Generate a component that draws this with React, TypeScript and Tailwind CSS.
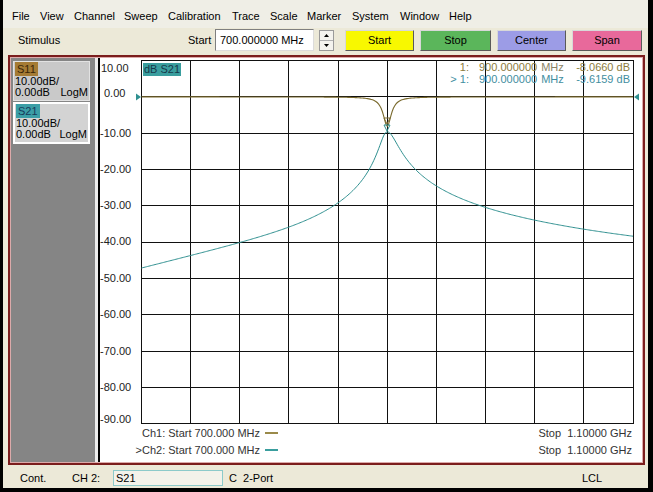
import React from 'react';

// plot geometry, in page pixels
const X0 = 141.5;
const XW = 491.5;
const Y0DB = 96.9;
const PX_DB = 3.63;

const gridX = Array.from({ length: 11 }, (_, i) => Math.round(141 + i * 49.15) + 0.5);
const gridY = Array.from({ length: 11 }, (_, i) => Math.floor(60.6 + i * 36.3) + 0.5);

const xForFreq = (f: number) => X0 + ((f - 700) / 400) * XW;
const yForDb = (db: number) => Y0DB - db * PX_DB;

const s21Db = (f: number) => {
  const d = f - 900;
  if (d < 0) {
    const a = -d;
    return -9.6159 - 10 * Math.log10(1 + Math.pow(a / 5.2, 2.2) + Math.pow(a / 54, 6));
  }
  return -9.6159 - 10 * Math.log10(1 + Math.pow(d / 7.3, 2));
};

const s11Db = (f: number) => {
  const d = f - 900;
  return -8.066 / (1 + Math.pow(d / 4, 2));
};

const tracePoints = (fn: (f: number) => number) => {
  const pts: string[] = [];
  for (let f = 700; f <= 1100; f += 1) {
    pts.push(`${xForFreq(f).toFixed(2)},${yForDb(fn(f)).toFixed(2)}`);
  }
  return pts.join(' ');
};

const yLabels = [
  { t: '10.00', x: 101, y: 68 },
  { t: '0.00', x: 104, y: 93 },
  { t: '-10.00', x: 100, y: 133 },
  { t: '-20.00', x: 100, y: 169 },
  { t: '-30.00', x: 100, y: 205 },
  { t: '-40.00', x: 100, y: 241 },
  { t: '-50.00', x: 100, y: 278 },
  { t: '-60.00', x: 100, y: 314 },
  { t: '-70.00', x: 100, y: 351 },
  { t: '-80.00', x: 100, y: 387 },
  { t: '-90.00', x: 100, y: 419 },
];

// menu captions with the width each one takes in the bar
const menu: [string, string][] = [
  ['File', 'w-[28px]'],
  ['View', 'w-[34px]'],
  ['Channel', 'w-[50px]'],
  ['Sweep', 'w-[44px]'],
  ['Calibration', 'w-[64px]'],
  ['Trace', 'w-[38px]'],
  ['Scale', 'w-[37px]'],
  ['Marker', 'w-[45px]'],
  ['System', 'w-[48px]'],
  ['Window', 'w-[49px]'],
  ['Help', 'w-[30px]'],
];

const S11_COLOR = '#7a6a2e';
const S21_COLOR = '#2f9090';

const TraceBox: React.FC<{ name: string; labelClass: string; boxClass: string }> = ({ name, labelClass, boxClass }) => (
  <div className={`w-[77px] flex flex-col ${boxClass}`}>
    <div className="h-[14px] flex items-center pl-[1px]">
      <span className={`px-[2px] h-[14px] leading-[14px] ${labelClass}`}>{name}</span>
    </div>
    <div className="h-[11px] leading-[11px] pl-[1px]">10.00dB/</div>
    <div className="h-[11px] leading-[11px] pl-[1px] pr-[1px] flex justify-between">
      <span>0.00dB</span>
      <span>LogM</span>
    </div>
  </div>
);

const ToolButton: React.FC<{ label: string; className: string }> = ({ label, className }) => (
  <div
    className={`h-[21px] flex items-center justify-center border border-[#d8d8d8] border-b-[#5a5a5a] border-r-[#5a5a5a] ${className}`}
  >
    {label}
  </div>
);

const Chart: React.FC = () => (
  <div className="relative flex-1 flex flex-col bg-white border-l-2 border-black">
    <svg width={540} height={367} viewBox="100 58 540 367" className="block">
      {gridY.map((y) => (
        <line key={`h${y}`} x1={141} x2={634} y1={y} y2={y} stroke="#111" strokeWidth={1} />
      ))}
      {gridX.map((x) => (
        <line key={`v${x}`} x1={x} x2={x} y1={60} y2={424} stroke="#111" strokeWidth={1} />
      ))}
      {yLabels.map((l) => (
        <text key={l.t} x={l.x} y={l.y + 4} fontSize={11} fill="#222">
          {l.t}
        </text>
      ))}
      <polyline points={tracePoints(s11Db)} fill="none" stroke={S11_COLOR} strokeWidth={1.1} />
      <polyline points={tracePoints(s21Db)} fill="none" stroke={S21_COLOR} strokeWidth={1} />
      {/* markers */}
      <polygon points="384,118 390,118 387,124" fill="none" stroke={S11_COLOR} strokeWidth={1} />
      <polygon points="384,125 390,125 387,131" fill="none" stroke={S21_COLOR} strokeWidth={1} />
      {/* reference level arrows */}
      <polygon points="136,93.5 141,97 136,100.5" fill={S21_COLOR} />
      <polygon points="639,93.5 634,97 639,100.5" fill={S21_COLOR} />
    </svg>

    <div className="absolute left-[43px] top-[5px] h-[13px] leading-[13px] px-[1px] bg-[#3a9e9e] text-[#17384a]">
      dB S21
    </div>

    <div className="absolute left-[340px] top-[3px] w-[190px] flex flex-col">
      <div className="h-[12px] leading-[12px] flex text-[#8c7b3c]">
        <span className="w-[29px] text-right">1:</span>
        <span className="ml-[10px]">900.000000</span>
        <span className="ml-[4px] text-[#8a8366]">MHz</span>
        <span className="flex-1 text-right">-8.0660 dB</span>
      </div>
      <div className="h-[12px] leading-[12px] flex text-[#3f8ea0]">
        <span className="w-[29px] text-right">&gt; 1:</span>
        <span className="ml-[10px]">900.000000</span>
        <span className="ml-[4px]">MHz</span>
        <span className="flex-1 text-right">-9.6159 dB</span>
      </div>
    </div>

    <div className="h-[16px] flex items-center text-[#333]">
      <div className="w-[178px] flex justify-end items-center gap-[5px]">
        <span>Ch1: Start 700.000 MHz</span>
        <span className="w-[13px] h-[2px] bg-[#9a8a4a]" />
      </div>
      <span className="ml-auto mr-[10px] whitespace-pre">Stop  1.10000 GHz</span>
    </div>
    <div className="h-[18px] flex items-center text-[#333]">
      <div className="w-[178px] flex justify-end items-center gap-[5px]">
        <span>&gt;Ch2: Start 700.000 MHz</span>
        <span className="w-[13px] h-[2px] bg-[#3a9e9e]" />
      </div>
      <span className="ml-auto mr-[10px] whitespace-pre">Stop  1.10000 GHz</span>
    </div>
  </div>
);

export default function App() {
  return (
    <div className="w-[653px] h-[492px] bg-[#ece9d8] border-l-[3px] border-r-[5px] border-b-[4px] border-black flex flex-col text-[11px] text-black font-['Liberation_Sans',Arial,sans-serif] overflow-hidden">
      {/* menu bar */}
      <div className="h-[28px] pt-[4px] pl-[9px] flex items-center bg-[#efeee6]">
        {menu.map(([m, w]) => (
          <span key={m} className={`${w} shrink-0`}>
            {m}
          </span>
        ))}
      </div>

      {/* stimulus toolbar */}
      <div className="h-[27px] pb-[3px] flex items-center">
        <span className="w-[185px] pl-[15px]">Stimulus</span>
        <span className="w-[27px]">Start</span>
        <div className="w-[99px] h-[22px] bg-white border border-[#7f7f7f] border-b-[#dcdcdc] border-r-[#dcdcdc] flex items-center pl-[4px]">
          700.000000 MHz
        </div>
        <div className="ml-[5px] w-[15px] h-[21px] flex flex-col border border-[#9a9a9a] bg-[#f4f3ee]">
          <div className="flex-1 flex items-center justify-center border-b border-[#b0b0b0]">
            <svg width={5} height={3} viewBox="0 0 5 3">
              <polygon points="0,3 5,3 2.5,0" fill="#000" />
            </svg>
          </div>
          <div className="flex-1 flex items-center justify-center">
            <svg width={5} height={3} viewBox="0 0 5 3">
              <polygon points="0,0 5,0 2.5,3" fill="#000" />
            </svg>
          </div>
        </div>
        <div className="ml-[11px] flex gap-[6px]">
          <ToolButton label="Start" className="w-[69px] bg-[#f8f800]" />
          <ToolButton label="Stop" className="w-[71px] bg-[#5bb65b]" />
          <ToolButton label="Center" className="w-[69px] bg-[#9c9ce6]" />
          <ToolButton label="Span" className="w-[70px] bg-[#e8699b]" />
        </div>
      </div>

      {/* channel window */}
      <div className="ml-[5px] mr-[3px] h-[410px] border-2 border-[#7b1d1d] flex">
        <div className="flex-1 flex border border-[#dcaaaa]">
          <div className="w-[87px] bg-[#858585] border-r-[3px] border-[#ececec] pt-[3px] pl-[2px] flex flex-col gap-[1px]">
            <TraceBox
              name="S11"
              labelClass="bg-[#a57b34] text-[#3a2608]"
              boxClass="h-[40px] bg-[#c9c9c9] border border-[#e2e2e2]"
            />
            <TraceBox
              name="S21"
              labelClass="bg-[#3b9ea6] text-[#173a5a]"
              boxClass="h-[42px] bg-[#d3d3d3] border-2 border-white"
            />
          </div>
          <Chart />
        </div>
      </div>

      {/* status bar */}
      <div className="h-[23px] pt-[3px] flex items-center">
        <span className="w-[69px] pl-[17px]">Cont.</span>
        <span className="w-[41px]">CH 2:</span>
        <div className="w-[110px] h-[16px] border border-[#8ccaca] bg-[#f3f2ea] flex items-center pl-[2px]">
          S21
        </div>
        <span className="w-[359px] pl-[6px] whitespace-pre">C  2-Port</span>
        <span>LCL</span>
      </div>
    </div>
  );
}
